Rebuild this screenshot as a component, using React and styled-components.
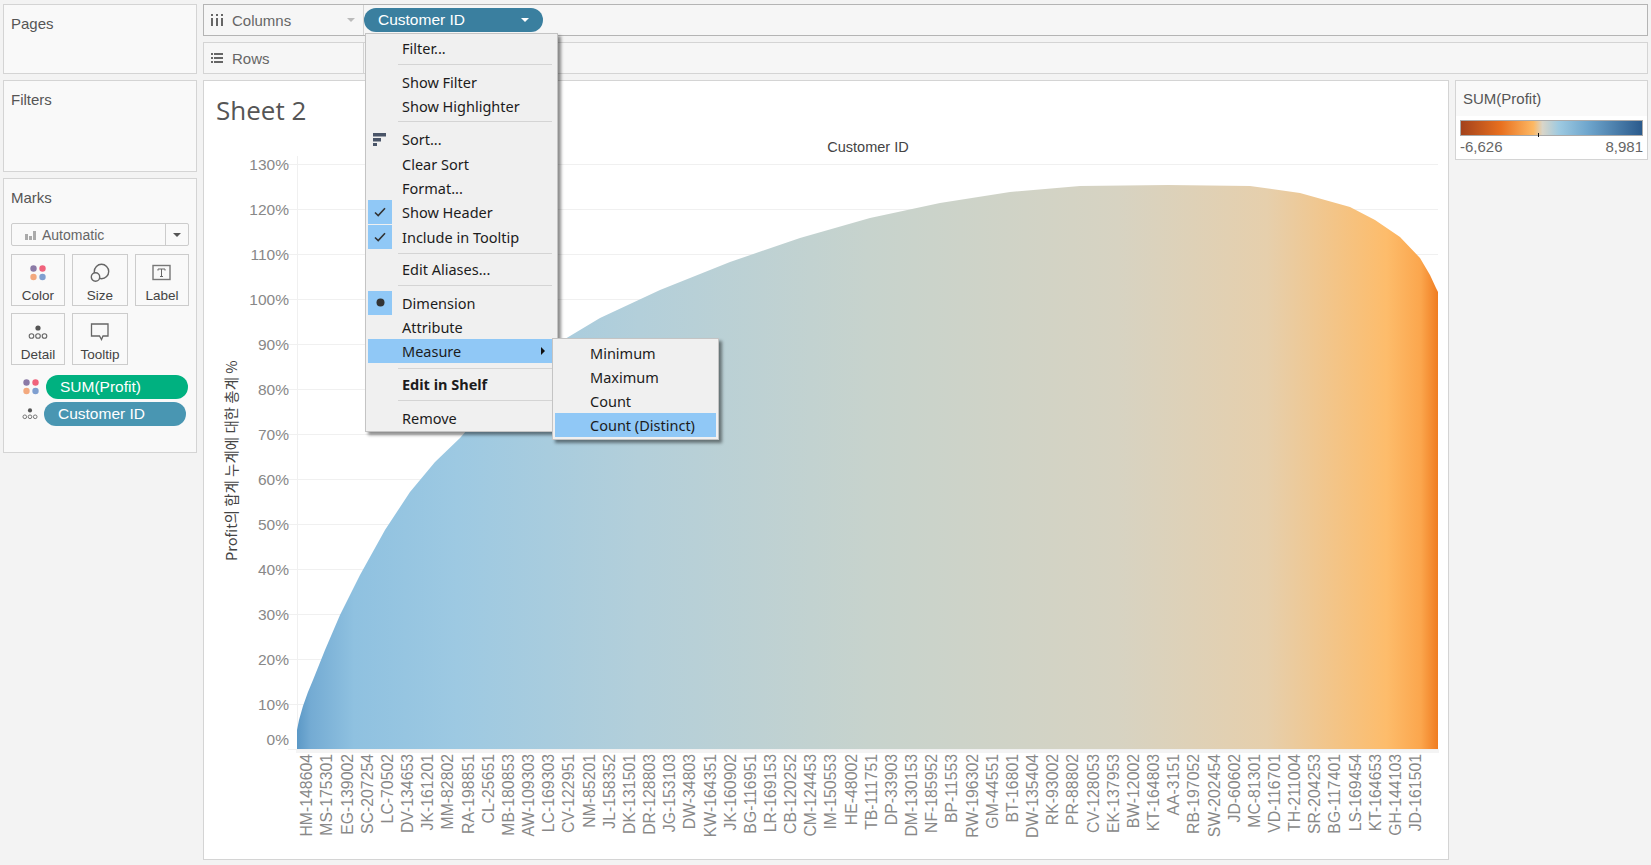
import React from "react";
import styled, { createGlobalStyle } from "styled-components";
import { ChevronDown } from "lucide-react";

const GlobalStyle = createGlobalStyle`
  html, body { margin: 0; padding: 0; background: #f3f3f3; }
  body { font-family: "Liberation Sans", Arial, sans-serif; color: #555; overflow: hidden; }
`;

const CUSTOMERS = "HM-148604 MS-175301 EG-139002 SC-207254 LC-70502 DV-134653 JK-161201 MM-82802 RA-198851 CL-25651 MB-180853 AW-109303 LC-169303 CV-122951 NM-85201 JL-158352 DK-131501 DR-128803 JG-153103 DW-34803 KW-164351 JK-160902 BG-116951 LR-169153 CB-120252 CM-124453 IM-150553 HE-48002 TB-111751 DP-33903 DM-130153 NF-185952 BP-11553 RW-196302 GM-44551 BT-16801 DW-135404 RK-93002 PR-88802 CV-128053 EK-137953 BW-12002 KT-164803 AA-3151 RB-197052 SW-202454 JD-60602 MC-81301 VD-116701 TH-211004 SR-204253 BG-117401 LS-169454 KT-164653 GH-144103 JD-161501".split(" ");

// outline of the running total, in page pixels
const CURVE = [
  [297, 730], [299, 720], [303, 706], [308, 692], [313, 680], [325, 650], [340, 615],
  [360, 575], [385, 530], [410, 492], [435, 462], [460, 438], [500, 392], [550, 348],
  [600, 318], [660, 290], [730, 262], [800, 238], [870, 218], [940, 203], [1010, 192],
  [1080, 186], [1168, 185], [1250, 186], [1300, 193], [1350, 207], [1375, 220], [1400, 237],
  [1420, 258], [1430, 275], [1436, 288], [1438, 292],
];

const Page = styled.div`
  position: relative;
  width: 1651px;
  height: 865px;
  display: grid;
  grid-template-columns: 194px 1246px 193px;
  grid-template-rows: 70px 780px;
  column-gap: 6px;
  row-gap: 6px;
  padding: 4px 3px 0 3px;
  box-sizing: border-box;
`;

const Sidebar = styled.div`
  grid-row: 1 / 3;
  display: flex;
  flex-direction: column;
  gap: 6px;
`;

const Card = styled.section`
  box-sizing: border-box;
  height: ${(p) => p.$h}px;
  background: #f9f9f9;
  border: 1px solid #d4d4d4;
  padding: 10px 7px;
`;

const CardTitle = styled.div`
  font-size: 15px;
  line-height: 18px;
  color: #555;
`;

const Shelves = styled.div`
  grid-column: 2 / 4;
  display: flex;
  flex-direction: column;
  gap: 6px;
`;

const Shelf = styled.div`
  box-sizing: border-box;
  height: ${(p) => p.$h}px;
  display: flex;
  background: #f6f6f6;
  border: 1px solid ${(p) => (p.$active ? "#b4b4b4" : "#d4d4d4")};
`;

const ShelfLabel = styled.div`
  box-sizing: border-box;
  width: 160px;
  display: flex;
  align-items: center;
  gap: 9px;
  padding-left: 7px;
  padding-right: 8px;
  font-size: 15px;
  color: #666;
  border-right: 1px solid #d4d4d4;
`;

const Caret = styled.span`
  width: 0;
  height: 0;
  margin-left: auto;
  border-left: 4px solid transparent;
  border-right: 4px solid transparent;
  border-top: 4px solid ${(p) => p.$color || "#bbb"};
`;

const Pill = styled.div`
  box-sizing: border-box;
  display: flex;
  align-items: center;
  height: 24px;
  width: ${(p) => p.$w}px;
  padding: 0 14px;
  border-radius: 12px;
  background: ${(p) => p.$color};
  color: #fff;
  font-size: 15.5px;
`;

const ColumnsPill = styled(Pill)`
  margin: 3px 0 0 0;
`;

const MarkSelect = styled.div`
  box-sizing: border-box;
  height: 23px;
  margin-top: 16px;
  display: flex;
  align-items: center;
  border: 1px solid #ccc;
  border-radius: 2px;
  font-size: 14px;
  color: #666;
  padding-left: 13px;
  gap: 6px;
`;

const SelectArrow = styled.div`
  margin-left: auto;
  width: 22px;
  height: 100%;
  display: flex;
  align-items: center;
  justify-content: center;
  border-left: 1px solid #ccc;
`;

const MarkGrid = styled.div`
  display: grid;
  grid-template-columns: 54px 56px 54px;
  grid-auto-rows: 52px;
  column-gap: 7px;
  row-gap: 7px;
  margin-top: 8px;
`;

const MarkButton = styled.div`
  box-sizing: border-box;
  display: flex;
  flex-direction: column;
  align-items: center;
  border: 1px solid #ccc;
  padding-top: 6px;
  font-size: 13.5px;
  color: #444;

  svg { height: 24px; display: block; margin-bottom: 3px; }
`;

const PillRow = styled.div`
  display: flex;
  align-items: center;
  margin-top: ${(p) => p.$top}px;
  margin-left: 11px;
  gap: 6px;

  svg { flex: none; }
`;

const ChartPanel = styled.section`
  box-sizing: border-box;
  display: flex;
  flex-direction: column;
  background: #fff;
  border: 1px solid #d4d4d4;
`;

const SheetTitle = styled.h1`
  margin: 0;
  height: 49px;
  box-sizing: border-box;
  padding: 13px 0 0 12px;
  font-size: 26px;
  line-height: 32px;
  font-weight: 400;
  font-family: "Open Sans", sans-serif;
  color: #555;
`;

const Chart = styled.svg`
  display: block;
  flex: 1;
  width: 100%;
  font-family: "Liberation Sans", Arial, sans-serif;
`;

const Legend = styled.section`
  box-sizing: border-box;
  height: 80px;
  display: flex;
  flex-direction: column;
  background: #fff;
  border: 1px solid #d4d4d4;
`;

const LegendTitle = styled.div`
  height: 35px;
  box-sizing: border-box;
  padding: 9px 0 0 7px;
  background: #f9f9f9;
  font-size: 15px;
  color: #555;
`;

const LegendBar = styled.div`
  position: relative;
  box-sizing: border-box;
  height: 16px;
  margin: 4px 4px 0 4px;
  border: 1px solid #aaa;
  background: linear-gradient(90deg, #a3421c 0%, #e8701f 22%, #fdb863 40%, #d9d5c8 45%, #9ecae1 54%, #6fa6cd 70%, #2a5a8c 100%);
`;

const LegendTick = styled.span`
  position: absolute;
  left: 77px;
  bottom: -2px;
  width: 1px;
  height: 4px;
  background: #111;
`;

const LegendScale = styled.div`
  display: flex;
  justify-content: space-between;
  margin: 2px 4px 0 4px;
  font-size: 15px;
  line-height: 18px;
  color: #666;
`;

const Menu = styled.div`
  position: absolute;
  left: ${(p) => p.$x}px;
  top: ${(p) => p.$y}px;
  width: ${(p) => p.$w}px;
  box-sizing: border-box;
  padding: ${(p) => p.$pad};
  background: #f0f0f0;
  border: 1px solid #c4c4c4;
  box-shadow: 3px 3px 3px rgba(0, 0, 0, 0.45);
  font-family: "Noto Sans", sans-serif;
  font-size: 14.5px;
  color: #1c1c1c;
`;

const Row = styled.div`
  position: relative;
  display: flex;
  align-items: center;
  height: ${(p) => (p.$tall ? 24.4 : 24)}px;
  padding-left: ${(p) => p.$indent || 34}px;
  font-weight: ${(p) => (p.$bold ? 700 : 400)};
  background: ${(p) => (p.$hot ? "#90c8f6" : "transparent")};
`;

const Gutter = styled.span`
  position: absolute;
  left: 0;
  top: 0;
  width: 24px;
  height: 24px;
  display: flex;
  align-items: center;
  justify-content: center;
  background: ${(p) => (p.$on ? "#90c8f6" : "transparent")};
`;

const Sep = styled.div`
  height: ${(p) => p.$h}px;
  box-sizing: border-box;
  padding-top: ${(p) => p.$line}px;
  margin-left: 30px;
  margin-right: 3px;

  &::after {
    content: "";
    display: block;
    height: 1px;
    background: #d4d4d4;
  }
`;

const SubArrow = styled.span`
  position: absolute;
  right: 10px;
  width: 0;
  height: 0;
  border-top: 4px solid transparent;
  border-bottom: 4px solid transparent;
  border-left: 4px solid #111;
`;

const ColorIcon = () => (
  <svg width="18" height="18" viewBox="0 0 18 18">
    <circle cx="4.5" cy="4.5" r="3.2" fill="#8b7aa6" />
    <circle cx="13.5" cy="4.5" r="3.2" fill="#f0637c" />
    <circle cx="4.5" cy="13" r="3.2" fill="#f3a97e" />
    <circle cx="13.5" cy="13" r="3.2" fill="#7f9fd0" />
  </svg>
);

const DetailIcon = ({ w = 20 }) => (
  <svg width={w} height={w * 0.7} viewBox="0 0 20 14" fill="none" stroke="#666" strokeWidth="1.1">
    <circle cx="10" cy="3" r="2.6" fill="#555" stroke="none" />
    <circle cx="3.5" cy="11" r="2.3" />
    <circle cx="10" cy="11" r="2.3" />
    <circle cx="16.5" cy="11" r="2.3" />
  </svg>
);

const SizeIcon = () => (
  <svg width="20" height="20" viewBox="0 0 20 20" fill="none" stroke="#666" strokeWidth="1.4">
    <circle cx="11.5" cy="8.5" r="7.2" />
    <circle cx="5.5" cy="14" r="4.2" fill="#f9f9f9" />
  </svg>
);

const LabelIcon = () => (
  <svg width="20" height="18" viewBox="0 0 20 18" fill="none">
    <rect x="1" y="1.5" width="17" height="14" stroke="#777" strokeWidth="1.4" />
    <path d="M6 5h7v1.6M9.5 5v7.5M8 12.5h3M6 5v1.6" stroke="#666" strokeWidth="1" />
  </svg>
);

const TooltipIcon = () => (
  <svg width="20" height="19" viewBox="0 0 20 19" fill="none">
    <path d="M1.5 1.5h16.5v12h-5l-1.5 3.5-2-3.5H1.5z" stroke="#666" strokeWidth="1.3" />
  </svg>
);

const ChartArea = () => {
  const ticks = Array.from({ length: 14 }, (_, i) => i * 10);
  const yOf = (p) => 749 - p * 4.5;
  const outline = CURVE.map(([x, y]) => `${x},${y}`).join(" L");
  return (
    <Chart viewBox="204 130 1244 728" preserveAspectRatio="xMinYMin">
      <defs>
        <linearGradient id="profitFill" x1="297" x2="1438" y1="0" y2="0" gradientUnits="userSpaceOnUse">
          <stop offset="0" stopColor="#5b98c6" />
          <stop offset="0.012" stopColor="#74abd3" />
          <stop offset="0.05" stopColor="#8fc1e0" />
          <stop offset="0.14" stopColor="#9dc9e2" />
          <stop offset="0.3" stopColor="#b3cfda" />
          <stop offset="0.5" stopColor="#c7d3cd" />
          <stop offset="0.72" stopColor="#d7d3c2" />
          <stop offset="0.85" stopColor="#e6cfac" />
          <stop offset="0.955" stopColor="#fdbc6b" />
          <stop offset="0.985" stopColor="#fba64d" />
          <stop offset="1" stopColor="#f07c20" />
        </linearGradient>
      </defs>
      <text x="868" y="152" fontSize="14.5" textAnchor="middle" fill="#444">Customer ID</text>
      <text
        transform="translate(237 561) rotate(-90)"
        fontSize="14.5"
        fontFamily="'Noto Sans CJK KR', 'Liberation Sans', sans-serif"
        fill="#444"
      >
        Profit의 합계 누계에 대한 총계 %
      </text>
      <path d="M297.5 156V753" stroke="#f0f0f0" fill="none" />
      <rect x="296" y="749" width="1143" height="4" fill="#f4f4f4" />
      {ticks.map((t) => (
        <g key={t}>
          <path d={`M288 ${yOf(t) + 0.5}H1438`} stroke="#f0f0f0" />
          <text x="289" y={t === 0 ? 745 : yOf(t) + 5.5} fontSize="15.5" textAnchor="end" fill="#888">
            {t}%
          </text>
        </g>
      ))}
      <path d={`M${outline} L1438,749 L297,749 Z`} fill="url(#profitFill)" />
      {CUSTOMERS.map((c, i) => (
        <text
          key={c}
          transform={`translate(${312.3 + i * 20.16} 754) rotate(-90)`}
          fontSize="15.8"
          textAnchor="end"
          fill="#888"
        >
          {c}
        </text>
      ))}
    </Chart>
  );
};

export default function App() {
  return (
    <Page>
      <GlobalStyle />
      <Sidebar>
        <Card $h={70}>
          <CardTitle>Pages</CardTitle>
        </Card>
        <Card $h={92}>
          <CardTitle>Filters</CardTitle>
        </Card>
        <Card $h={275}>
          <CardTitle>Marks</CardTitle>
          <MarkSelect>
            <svg width="11" height="10" viewBox="0 0 11 10" fill="#aaa">
              <rect x="0" y="4" width="3" height="6" />
              <rect x="4" y="6" width="3" height="4" />
              <rect x="8" y="1" width="3" height="9" />
            </svg>
            Automatic
            <SelectArrow>
              <Caret $color="#555" style={{ margin: 0 }} />
            </SelectArrow>
          </MarkSelect>
          <MarkGrid>
            <MarkButton><ColorIcon />Color</MarkButton>
            <MarkButton><SizeIcon />Size</MarkButton>
            <MarkButton><LabelIcon />Label</MarkButton>
            <MarkButton><DetailIcon />Detail</MarkButton>
            <MarkButton><TooltipIcon />Tooltip</MarkButton>
          </MarkGrid>
          <PillRow $top={10}>
            <ColorIcon />
            <Pill $w={142} $color="#00b180">SUM(Profit)</Pill>
          </PillRow>
          <PillRow $top={3}>
            <DetailIcon w={16} />
            <Pill $w={142} $color="#4996b2">Customer ID</Pill>
          </PillRow>
        </Card>
      </Sidebar>

      <Shelves>
        <Shelf $h={32} $active>
          <ShelfLabel>
            <svg width="12" height="12" viewBox="0 0 12 12" fill="#666">
              <rect x="0" y="0" width="2" height="2" />
              <rect x="0" y="4" width="2" height="8" />
              <rect x="5" y="0" width="2" height="2" />
              <rect x="5" y="4" width="2" height="8" />
              <rect x="10" y="0" width="2" height="2" />
              <rect x="10" y="4" width="2" height="8" />
            </svg>
            Columns
            <Caret />
          </ShelfLabel>
          <ColumnsPill $w={179} $color="#3a7f9f">
            Customer ID
            <Caret $color="#fff" />
          </ColumnsPill>
        </Shelf>
        <Shelf $h={32}>
          <ShelfLabel>
            <svg width="12" height="10" viewBox="0 0 12 10" fill="#666">
              <rect x="0" y="0" width="2" height="2" />
              <rect x="3" y="0" width="9" height="2" />
              <rect x="0" y="4" width="2" height="2" />
              <rect x="3" y="4" width="9" height="2" />
              <rect x="0" y="8" width="2" height="2" />
              <rect x="3" y="8" width="9" height="2" />
            </svg>
            Rows
          </ShelfLabel>
        </Shelf>
      </Shelves>

      <ChartPanel>
        <SheetTitle>Sheet 2</SheetTitle>
        <ChartArea />
      </ChartPanel>

      <Legend>
        <LegendTitle>SUM(Profit)</LegendTitle>
        <LegendBar><LegendTick /></LegendBar>
        <LegendScale><span>-6,626</span><span>8,981</span></LegendScale>
      </Legend>

      <Menu $x={365} $y={33} $w={193} $pad="2px 2px 1px 2px">
        <Row>Filter...</Row>
        <Sep $h={10} $line={4} />
        <Row>Show Filter</Row>
        <Row>Show Highlighter</Row>
        <Sep $h={9} $line={3} />
        <Row $tall>
          <Gutter>
            <svg width="14" height="13" viewBox="0 0 14 13" fill="#4a5568">
              <rect x="0" y="0" width="13" height="3.5" />
              <rect x="0" y="5" width="8" height="3.5" />
              <rect x="0" y="10" width="4" height="3" />
            </svg>
          </Gutter>
          Sort...
        </Row>
        <Row $tall>Clear Sort</Row>
        <Row $tall>Format...</Row>
        <Row $tall>
          <Gutter $on>
            <svg width="12" height="10" viewBox="0 0 12 10" fill="none" stroke="#333" strokeWidth="1.6"><path d="M1 5.5l3.2 3L11 1.2" /></svg>
          </Gutter>
          Show Header
        </Row>
        <Row $tall>
          <Gutter $on>
            <svg width="12" height="10" viewBox="0 0 12 10" fill="none" stroke="#333" strokeWidth="1.6"><path d="M1 5.5l3.2 3L11 1.2" /></svg>
          </Gutter>
          Include in Tooltip
        </Row>
        <Sep $h={8} $line={4} />
        <Row>Edit Aliases...</Row>
        <Sep $h={10} $line={4} />
        <Row>
          <Gutter $on>
            <svg width="9" height="9" viewBox="0 0 9 9"><circle cx="4.5" cy="4.5" r="4" fill="#333" /></svg>
          </Gutter>
          Dimension
        </Row>
        <Row>Attribute</Row>
        <Row $hot>
          Measure
          <SubArrow />
        </Row>
        <Sep $h={9} $line={5} />
        <Row $bold>Edit in Shelf</Row>
        <Sep $h={10} $line={4} />
        <Row>Remove</Row>
      </Menu>

      <Menu $x={552} $y={338} $w={167} $pad="2px">
        <Row $indent={35}>Minimum</Row>
        <Row $indent={35}>Maximum</Row>
        <Row $indent={35}>Count</Row>
        <Row $indent={35} $hot>Count (Distinct)</Row>
      </Menu>
    </Page>
  );
}
